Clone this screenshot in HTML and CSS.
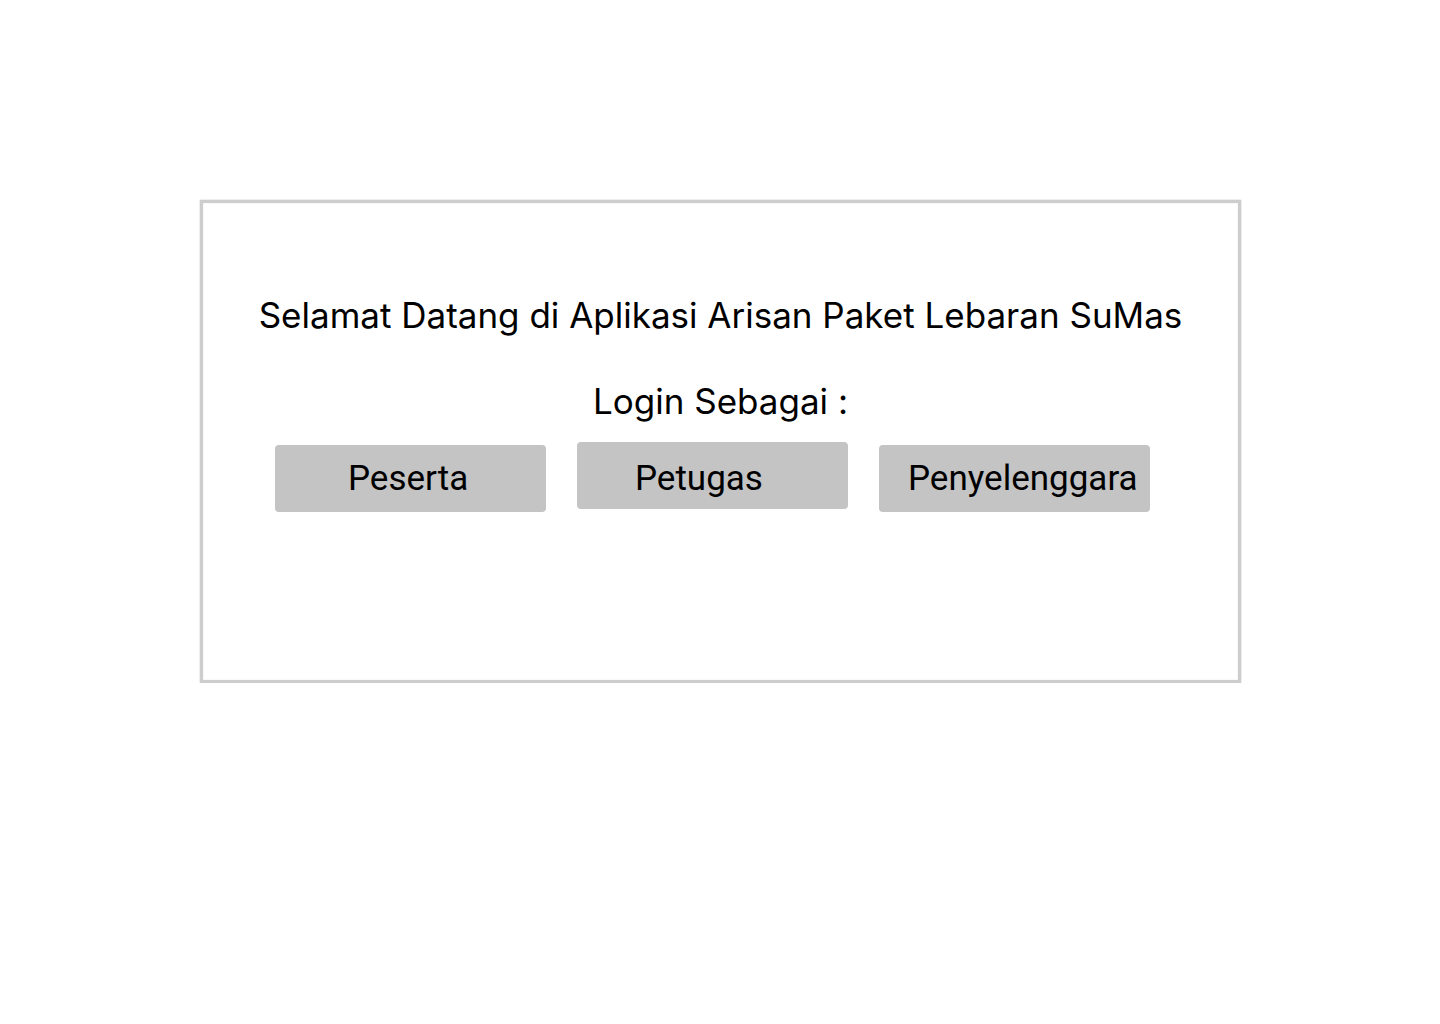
FILE: index.html
```html
<!DOCTYPE html>
<html lang="id">
<head>
<meta charset="utf-8">
<title>Arisan Paket Lebaran SuMas</title>
<link rel="stylesheet" href="styles.css">
</head>
<body>
  <main class="card">
    <h1 class="title">Selamat Datang di Aplikasi Arisan Paket Lebaran SuMas</h1>
    <p class="subtitle">Login Sebagai :</p>
    <div class="roles">
      <button class="role role-peserta">Peserta</button>
      <button class="role role-petugas">Petugas</button>
      <button class="role role-penyelenggara">Penyelenggara</button>
    </div>
  </main>
</body>
</html>
```
FILE: styles.css
```css
html, body {
  margin: 0;
  padding: 0;
  background: #ffffff;
}

body {
  font-family: Inter, "Noto Sans", sans-serif;
  color: #000;
}

.card {
  box-sizing: border-box;
  width: 1041px;
  height: 483px;
  margin: 200px 0 0 200px;
  border: 3px solid #cdcdcd;
  box-shadow: 0 0 1.5px rgba(0, 0, 0, 0.25), inset 0 0 1.5px rgba(0, 0, 0, 0.15);
  padding-top: 91px;
  display: flex;
  flex-direction: column;
}

.title {
  margin: 0;
  font-size: 35px;
  font-weight: 400;
  text-align: center;
  line-height: 42px;
}

.subtitle {
  margin: 44px 0 0;
  font-size: 35px;
  font-weight: 400;
  text-align: center;
  line-height: 42px;
}

.roles {
  display: flex;
  align-items: flex-start;
  gap: 31px;
  padding-left: 72px;
  margin-top: 20px;
}

.role {
  box-sizing: border-box;
  width: 271px;
  height: 67px;
  margin: 3px 0 0;
  border: none;
  border-radius: 4px;
  background: #c4c4c4;
  font-family: Roboto, "Liberation Sans", sans-serif;
  font-size: 35px;
  font-weight: 400;
  color: #000;
  text-align: left;
  line-height: 41px;
  padding: 0 0 1px;
  display: block;
}

.role-peserta {
  padding-left: 73px;
}

.role-petugas {
  margin-top: 0;
  padding-top: 5px;
  padding-bottom: 0;
  padding-left: 58px;
}

.role-penyelenggara {
  padding-left: 29px;
}
```
